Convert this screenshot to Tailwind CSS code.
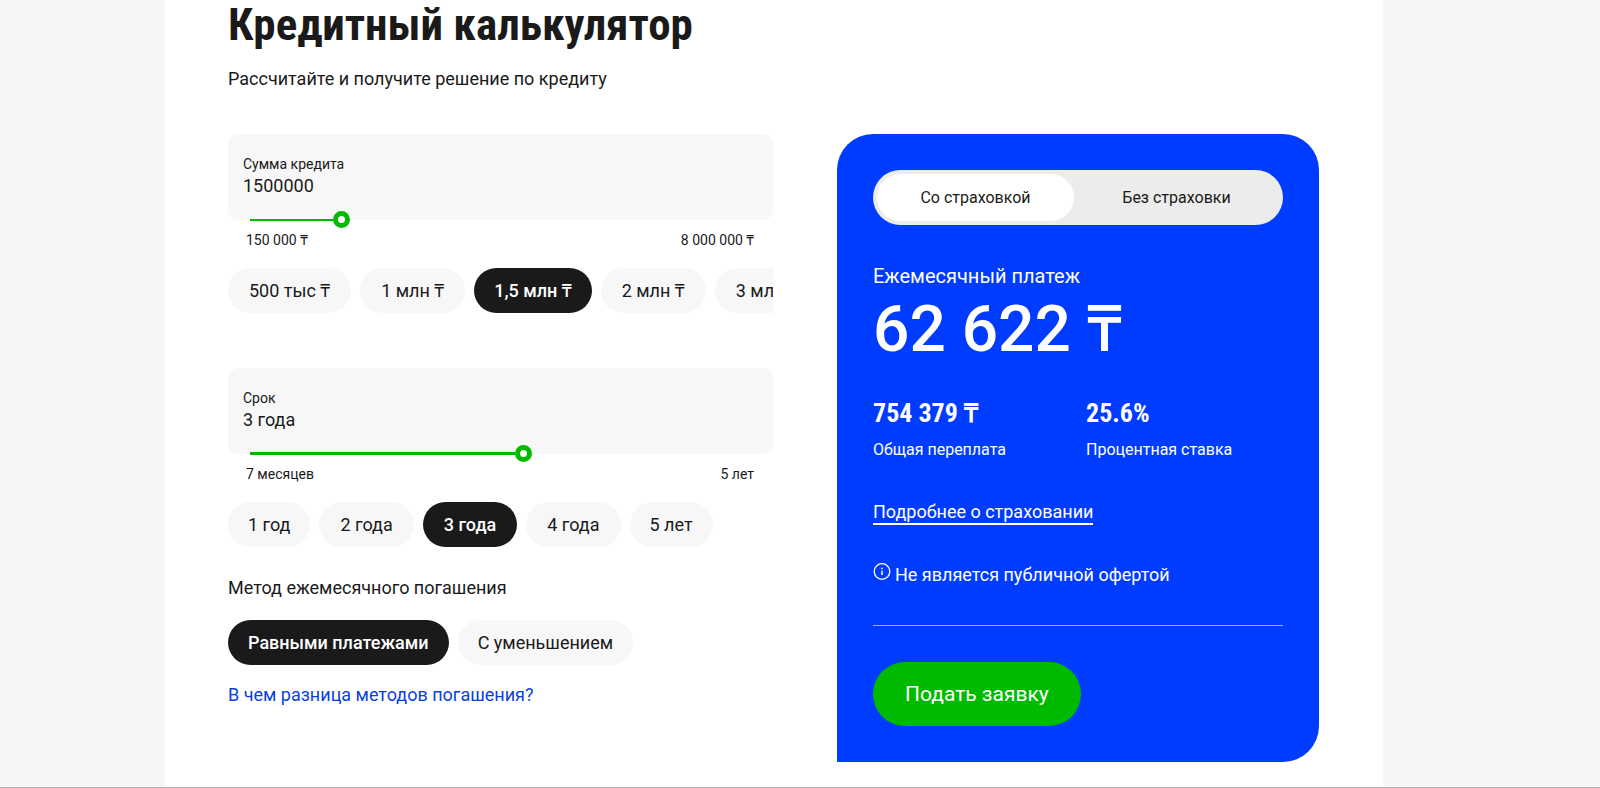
<!DOCTYPE html>
<html lang="ru">
<head>
  <meta charset="UTF-8">
  <meta name="viewport" content="width=device-width, initial-scale=1.0">
  <title>Кредитный калькулятор</title>
  <script src="https://cdn.jsdelivr.net/npm/@tailwindcss/browser@4"></script>
</head>
<body class="bg-[#f6f6f6] font-['Roboto','Noto_Sans',sans-serif] text-lg leading-6 text-[#1a1a1a]">

  <div class="min-h-screen flex justify-center border-b border-[#b5b5b5] pr-[52px]">
    <main class="w-full max-w-[1218px] bg-white pl-[63px] pr-16 pb-6">
      <h1 class="font-['Roboto_Condensed','Roboto',sans-serif] text-[45px] leading-[50px] font-bold">Кредитный калькулятор</h1>
      <p class="mt-[17px]">Рассчитайте и получите решение по кредиту</p>

      <div class="mt-[43px] grid grid-cols-[minmax(0,1fr)_482px] items-start gap-16">

        <!-- Calculator form -->
        <form>
          <!-- Amount -->
          <div class="relative rounded-[10px] bg-[#f7f7f7] px-[15px] pt-5 pb-[22px]">
            <label for="amount" class="block text-sm leading-5">Сумма кредита</label>
            <input id="amount" type="text" value="1500000" class="block h-6 w-full bg-transparent outline-none">
            <input type="range" aria-label="Сумма кредита" min="150000" max="8000000" step="50000" value="1500000"
              class="absolute -bottom-2 left-[22px] right-[22px] h-[17px] w-[501px] cursor-pointer appearance-none bg-linear-to-r from-[#00ba00] to-[#00ba00] bg-left bg-no-repeat [&::-webkit-slider-thumb]:size-[17px] [&::-webkit-slider-thumb]:appearance-none [&::-webkit-slider-thumb]:rounded-full [&::-webkit-slider-thumb]:border-[5px] [&::-webkit-slider-thumb]:border-[#00ba00] [&::-webkit-slider-thumb]:bg-white"
              style="background-size: 18% 2px">
          </div>
          <div class="mt-[10px] flex justify-between pl-[18px] pr-[19px] text-sm leading-5">
            <span>150 000 ₸</span>
            <span>8 000 000 ₸</span>
          </div>
          <div class="mt-[18px] flex gap-[9px] overflow-hidden whitespace-nowrap">
            <button type="button" class="h-[45px] shrink-0 rounded-full bg-[#f7f7f7] px-[21px]">500 тыс ₸</button>
            <button type="button" class="h-[45px] shrink-0 rounded-full bg-[#f7f7f7] px-[21px]">1 млн ₸</button>
            <button type="button" class="h-[45px] shrink-0 rounded-full bg-[#1a1a1a] px-5 text-white font-medium">1,5 млн ₸</button>
            <button type="button" class="h-[45px] shrink-0 rounded-full bg-[#f7f7f7] px-[21px]">2 млн ₸</button>
            <button type="button" class="h-[45px] shrink-0 rounded-full bg-[#f7f7f7] px-[21px]">3 млн ₸</button>
          </div>

          <!-- Term -->
          <div class="relative mt-[55px] rounded-[10px] bg-[#f7f7f7] px-[15px] pt-5 pb-[22px]">
            <label for="term" class="block text-sm leading-5">Срок</label>
            <input id="term" type="text" value="3 года" class="block h-6 w-full bg-transparent outline-none">
            <input type="range" aria-label="Срок" min="7" max="60" value="36"
              class="absolute -bottom-2 left-[22px] right-[22px] h-[17px] w-[501px] cursor-pointer appearance-none bg-linear-to-r from-[#00ba00] to-[#00ba00] bg-left bg-no-repeat [&::-webkit-slider-thumb]:size-[17px] [&::-webkit-slider-thumb]:appearance-none [&::-webkit-slider-thumb]:rounded-full [&::-webkit-slider-thumb]:border-[5px] [&::-webkit-slider-thumb]:border-[#00ba00] [&::-webkit-slider-thumb]:bg-white"
              style="background-size: 54% 3px">
          </div>
          <div class="mt-[10px] flex justify-between pl-[18px] pr-[19px] text-sm leading-5">
            <span>7 месяцев</span>
            <span>5 лет</span>
          </div>
          <div class="mt-[18px] flex gap-[9px] overflow-hidden whitespace-nowrap">
            <button type="button" class="h-[45px] shrink-0 rounded-full bg-[#f7f7f7] px-5">1 год</button>
            <button type="button" class="h-[45px] shrink-0 rounded-full bg-[#f7f7f7] px-[21px]">2 года</button>
            <button type="button" class="h-[45px] shrink-0 rounded-full bg-[#1a1a1a] px-[21px] text-white font-medium">3 года</button>
            <button type="button" class="h-[45px] shrink-0 rounded-full bg-[#f7f7f7] px-[21px]">4 года</button>
            <button type="button" class="h-[45px] shrink-0 rounded-full bg-[#f7f7f7] px-5">5 лет</button>
          </div>

          <!-- Repayment method -->
          <p class="mt-[29px]">Метод ежемесячного погашения</p>
          <div class="mt-5 flex gap-[9px] whitespace-nowrap">
            <button type="button" class="h-[45px] rounded-full bg-[#1a1a1a] px-5 text-white font-medium">Равными платежами</button>
            <button type="button" class="h-[45px] rounded-full bg-[#f7f7f7] px-5">С уменьшением</button>
          </div>
          <a href="#" class="mt-[18px] inline-block text-[#0a3fe0]">В чем разница методов погашения?</a>
        </form>

        <!-- Result card -->
        <section class="rounded-[36px] rounded-bl-none bg-[#003cff] px-9 py-9 text-white">
          <div class="grid h-[55px] grid-cols-[49%_51%] rounded-full bg-[#ececec] p-1 text-base text-[#1a1a1a]">
            <button type="button" class="rounded-full bg-white">Со страховкой</button>
            <button type="button" class="rounded-full">Без страховки</button>
          </div>

          <p class="mt-[37px] text-xl leading-7">Ежемесячный платеж</p>
          <p class="mt-2 text-[64px] leading-16 font-medium">62 622 ₸</p>

          <div class="mt-[35px] grid grid-cols-2 gap-4">
            <div>
              <p class="font-['Roboto_Condensed','Roboto',sans-serif] text-[26px] leading-8 font-bold">754 379 ₸</p>
              <p class="mt-[9px] text-base">Общая переплата</p>
            </div>
            <div>
              <p class="font-['Roboto_Condensed','Roboto',sans-serif] text-[26px] leading-8 font-bold">25.6%</p>
              <p class="mt-[9px] text-base">Процентная ставка</p>
            </div>
          </div>

          <a href="#" class="mt-[39px] inline-block border-b-2 border-white leading-[22px]">Подробнее о страховании</a>

          <div class="mt-[38px] flex gap-1">
            <svg class="size-[18px]" viewBox="0 0 18 18" fill="none" stroke="currentColor">
              <circle cx="9" cy="8.500" r="7.800" stroke-width="1.300"/>
              <path d="M9 7.700v4.300M9 4.800v1.500" stroke-width="1.500"/>
            </svg>
            <p>Не является публичной офертой</p>
          </div>

          <hr class="mt-[38px] border-white/60">
          <button type="button" class="mt-9 block h-16 rounded-full bg-[#00ba00] px-8 text-[21px]">Подать заявку</button>
        </section>
      </div>
    </main>
  </div>

</body>
</html>
